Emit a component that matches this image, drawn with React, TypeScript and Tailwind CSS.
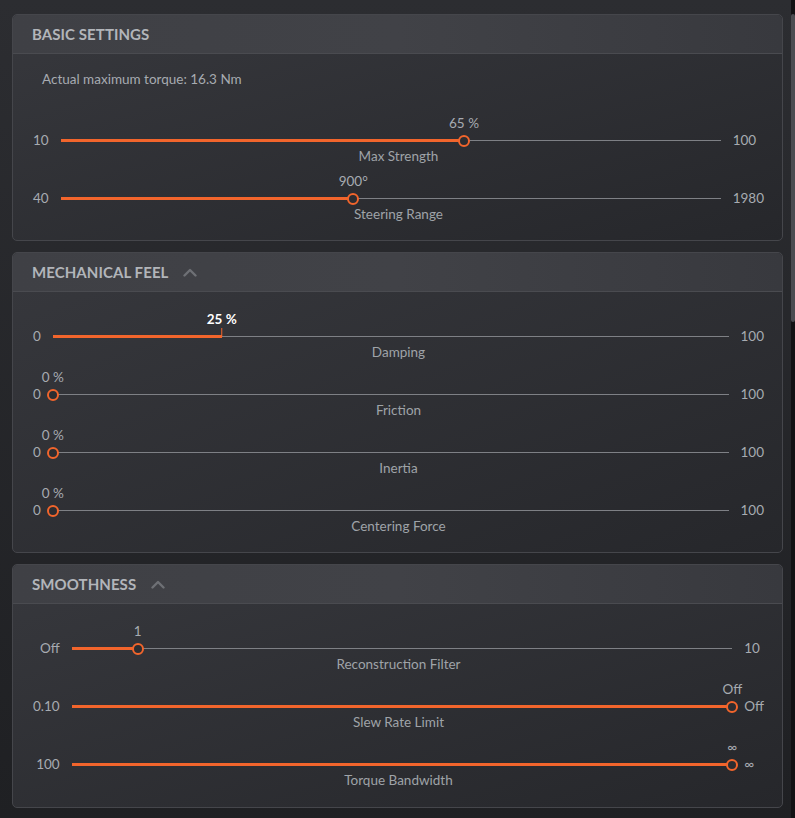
import React from "react";

type Slider = {
  min: string;
  max: string;
  label: string;
  value: string;
  frac: number;
  tick?: boolean;
};

type Section = {
  title: string;
  collapsible?: boolean;
  note?: string;
  bodyClass: string;
  sliders: Slider[];
};

const sections: Section[] = [
  {
    title: "BASIC SETTINGS",
    note: "Actual maximum torque: 16.3 Nm",
    bodyClass: "pt-[17px] pb-[19px] pl-[20px] pr-[18px]",
    sliders: [
      { min: "10", max: "100", label: "Max Strength", value: "65 %", frac: (65 - 10) / 90 },
      { min: "40", max: "1980", label: "Steering Range", value: "900°", frac: (900 - 40) / 1940 },
    ],
  },
  {
    title: "MECHANICAL FEEL",
    collapsible: true,
    bodyClass: "pt-[19px] pb-[19px] pl-[20px] pr-[18px]",
    sliders: [
      { min: "0", max: "100", label: "Damping", value: "25 %", frac: 0.25, tick: true },
      { min: "0", max: "100", label: "Friction", value: "0 %", frac: 0 },
      { min: "0", max: "100", label: "Inertia", value: "0 %", frac: 0 },
      { min: "0", max: "100", label: "Centering Force", value: "0 %", frac: 0 },
    ],
  },
  {
    title: "SMOOTHNESS",
    collapsible: true,
    bodyClass: "pt-[19px] pb-[20px] pl-[20px] pr-[18px]",
    sliders: [
      { min: "Off", max: "10", label: "Reconstruction Filter", value: "1", frac: 0.1 },
      { min: "0.10", max: "Off", label: "Slew Rate Limit", value: "Off", frac: 1 },
      { min: "100", max: "∞", label: "Torque Bandwidth", value: "∞", frac: 1 },
    ],
  },
];

function ChevronUp() {
  return (
    <svg width="14" height="9" viewBox="0 0 14 9" className="ml-[15px] mt-[1px]">
      <path d="M1.5 7.5 L7 2 L12.5 7.5" fill="none" stroke="#6e7075" strokeWidth="2.4" strokeLinecap="round" strokeLinejoin="round" />
    </svg>
  );
}

function SliderRow({ s }: { s: Slider }) {
  const pct = `${s.frac * 100}%`;
  return (
    <div className="col-span-3 grid grid-cols-subgrid grid-rows-[17px_17px_14px]">
      <div />
      <div className="relative">
        <span
          className={
            "absolute top-0 -translate-x-1/2 whitespace-nowrap leading-[17px] " +
            (s.tick ? "font-bold text-white" : "text-[#a7abb1]")
          }
          style={{ left: pct }}
        >
          {s.value}
        </span>
      </div>
      <div />

      <div className="text-right leading-[17px] text-[#a7abb1]">{s.min}</div>
      <div className="relative">
        <div className="absolute left-0 right-0 top-[8px] h-px bg-[#7e8085]" />
        <div className="absolute left-0 top-[7px] h-[3px] bg-[#f2652c]" style={{ width: pct }} />
        {s.tick ? (
          <div className="absolute top-[0px] h-[9px] w-[1.5px] -translate-x-1/2 bg-[#f2652c]" style={{ left: pct }} />
        ) : (
          <div
            className="absolute top-[2.5px] h-[12px] w-[12px] -translate-x-1/2 rounded-full border-2 border-[#f2652c] bg-[#2c2d31]"
            style={{ left: pct }}
          />
        )}
      </div>
      <div className="text-left leading-[17px] text-[#a7abb1]">{s.max}</div>

      <div className="col-span-3 text-center leading-[14px] text-[#9fa3a8]">{s.label}</div>
    </div>
  );
}

function Card({ sec }: { sec: Section }) {
  return (
    <section className="rounded-[5px] border border-[#45464b] bg-gradient-to-br from-[#37383d] to-[#26272b]">
      <header className="flex h-[39px] items-center rounded-t-[5px] border-b border-[#4a4b50] bg-gradient-to-r from-[#3f4045] via-[#414247] to-[#38393e] pl-[19px]">
        <h2 className="text-[15px] font-bold tracking-[0.005em] text-[#b2b5ba]">{sec.title}</h2>
        {sec.collapsible && <ChevronUp />}
      </header>
      <div className={sec.bodyClass}>
        {sec.note && (
          <p className="mb-[28px] pl-[9px] leading-[16px] text-[#a7abb1]">{sec.note}</p>
        )}
        <div className="grid grid-cols-[auto_1fr_auto] gap-x-[12px] gap-y-[10px]">
          {sec.sliders.map((s) => (
            <SliderRow key={s.label} s={s} />
          ))}
        </div>
      </div>
    </section>
  );
}

export default function App() {
  return (
    <div
      className="flex min-h-[818px] w-[795px] bg-gradient-to-b from-[#2c2d31] to-[#1f2023] text-[13.5px]"
      style={{ fontFamily: "Lato, 'Open Sans', sans-serif" }}
    >
      <main className="flex w-[791px] flex-col gap-[11px] pt-[14px] pb-[10px] pl-[12px] pr-[8px]">
        {sections.map((sec) => (
          <Card key={sec.title} sec={sec} />
        ))}
      </main>
      <div className="flex w-[4px] flex-col bg-[#121214]">
        <div className="mt-[14px] h-[308px] rounded-full bg-[#4b4c51]" />
      </div>
    </div>
  );
}
